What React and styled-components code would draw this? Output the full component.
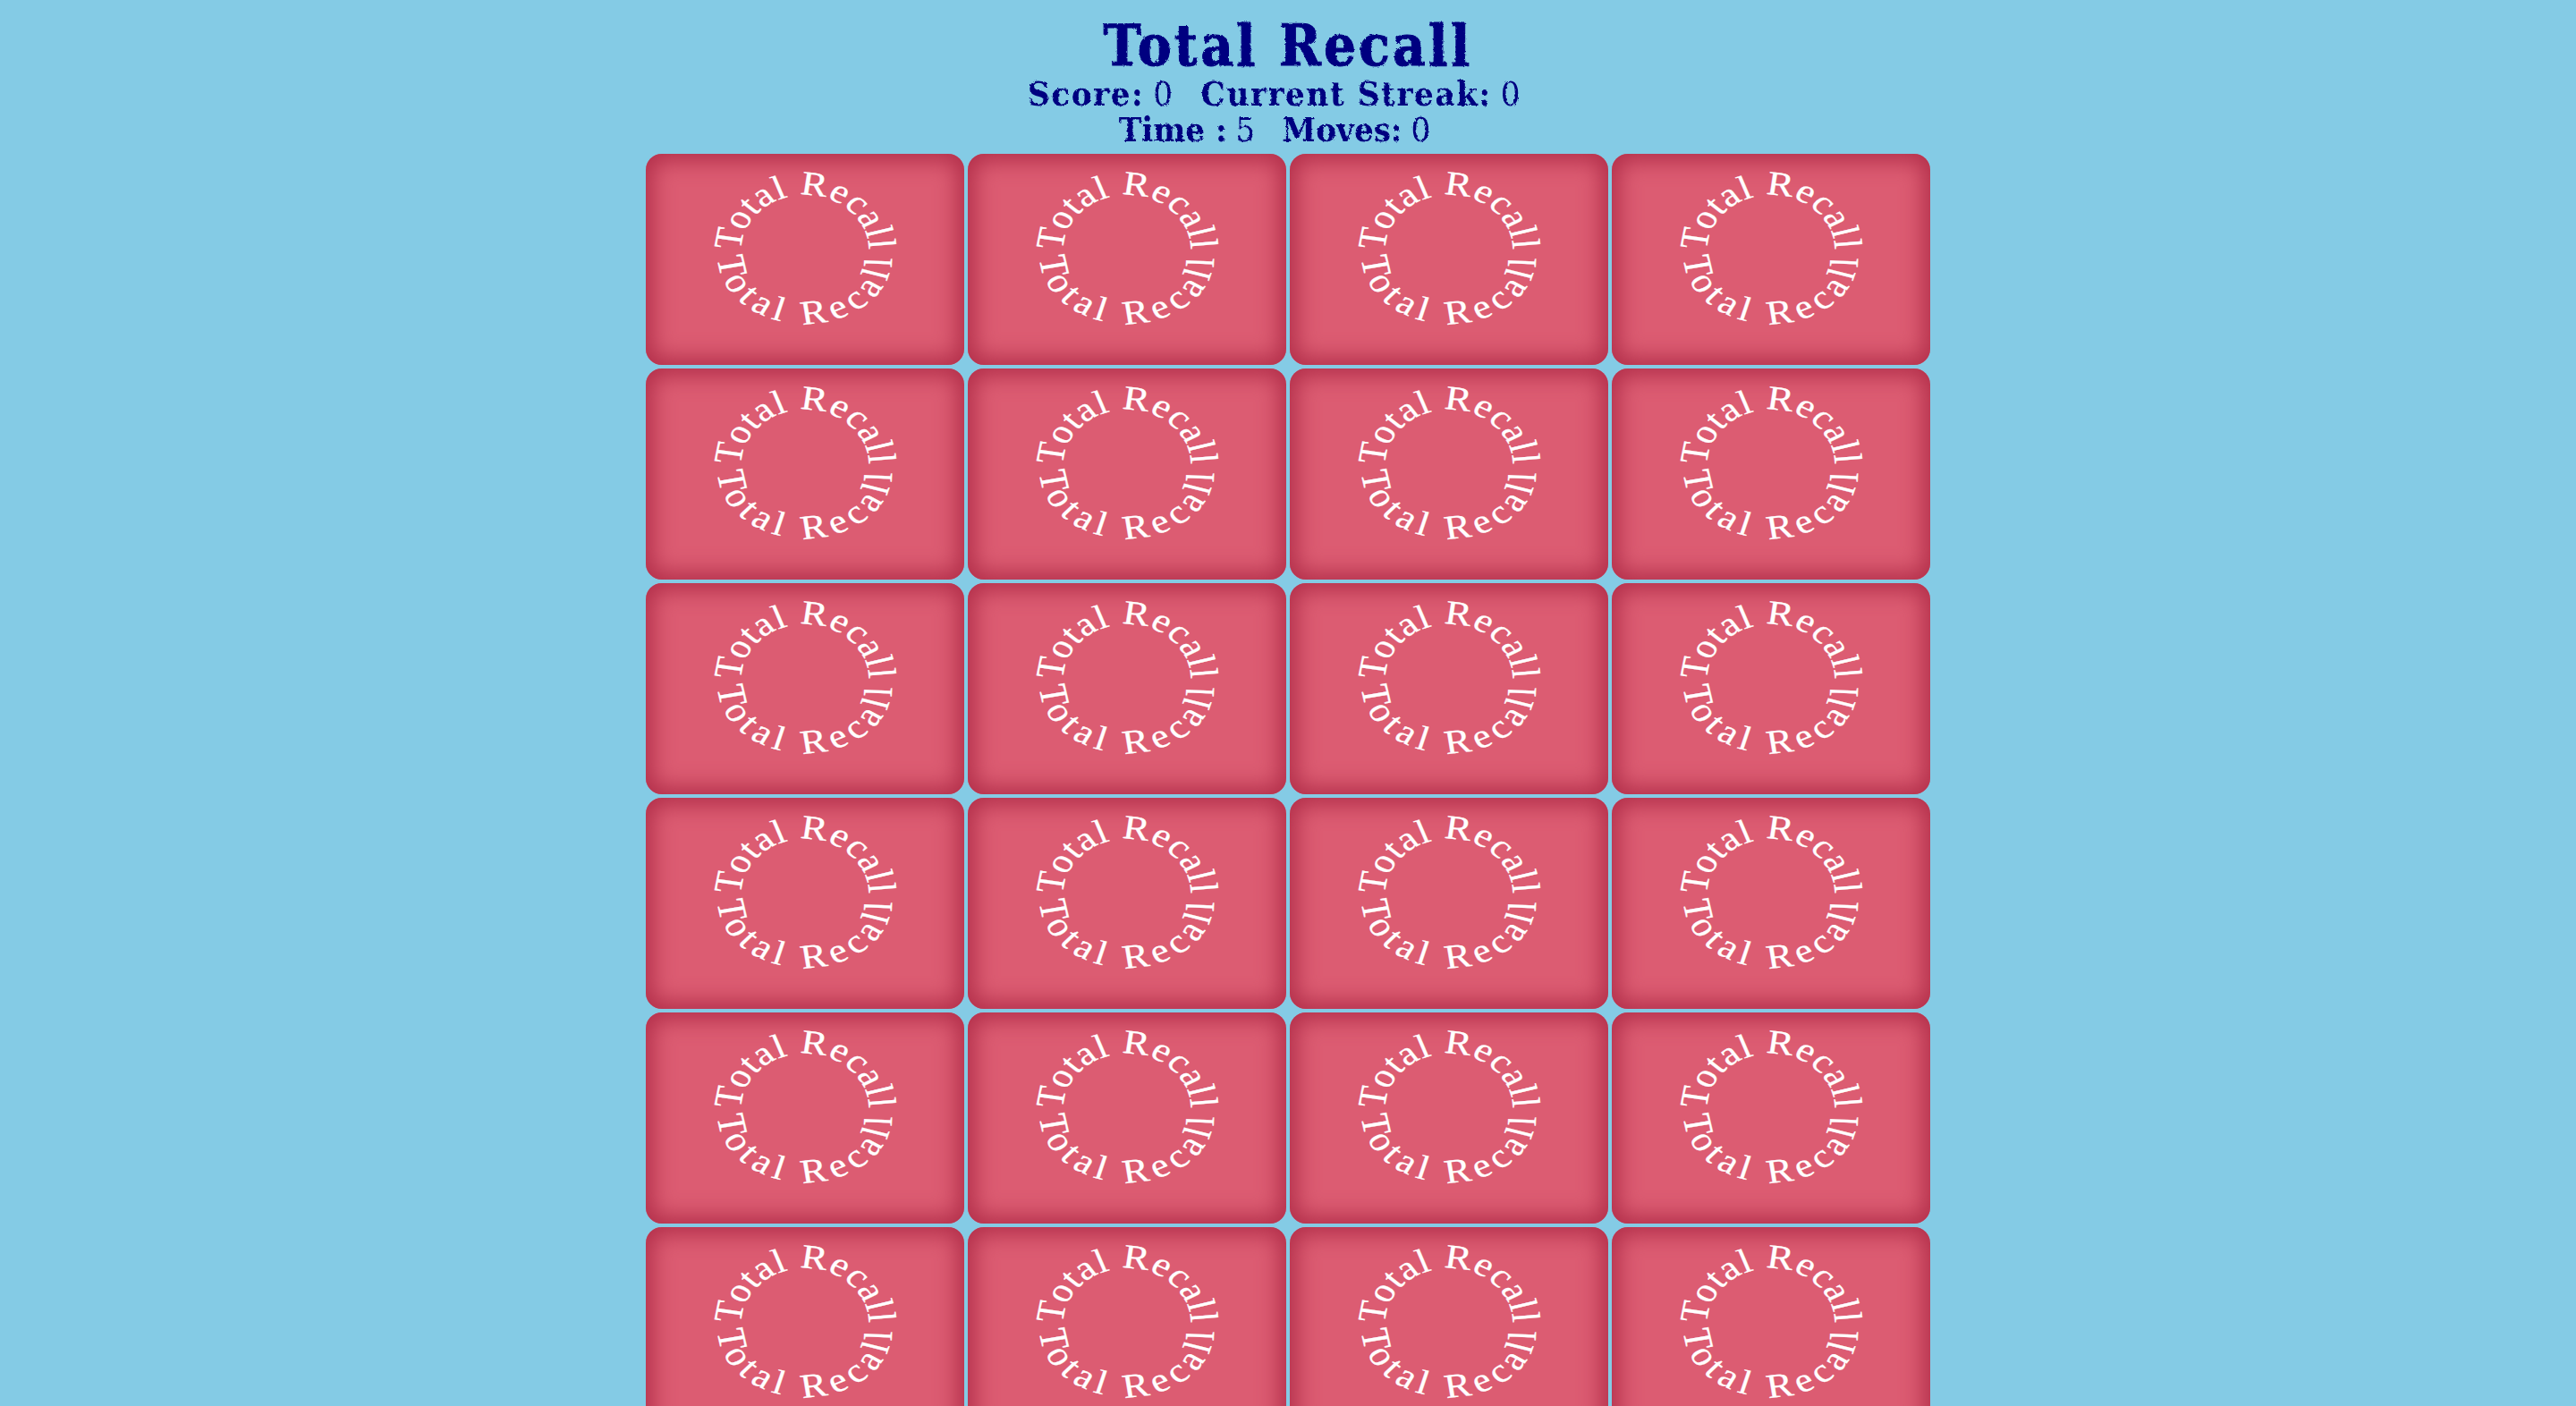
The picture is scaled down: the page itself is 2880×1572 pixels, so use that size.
import styled, { createGlobalStyle } from 'styled-components';

const GlobalStyle = createGlobalStyle`
  html, body {
    margin: 0;
    padding: 0;
    background: #84cbe5;
    overflow: hidden;
  }
`

const Page = styled.div`
  height: 1572px;
  overflow: hidden;
`
const Header = styled.header`
  height: 170px;
  padding-top: 17px;
  box-sizing: border-box;
  display: flex;
  flex-direction: column;
  align-items: center;
  color: #000080;
  font-family: "DejaVu Serif", "Liberation Serif", serif;
  font-stretch: condensed;
  filter: url(#rough);
`
const Title = styled.h1`
  margin: 0;
  font-size: 63px;
  line-height: 68px;
  font-weight: 700;
  letter-spacing: 3.2px;
  -webkit-text-stroke: 1px #000080;
`
const Stats = styled.div`
  display: flex;
  justify-content: center;
  font-size: 38px;
  line-height: 39px;
  font-weight: 700;
  letter-spacing: ${props => props.$spacing || 0}px;
`
const Stat = styled.span`
  margin-right: 30px;
`
const Value = styled.span`
  font-weight: 400;
  margin-left: 10px;
`
const Board = styled.div`
  width: 1440px;
  margin: 0 auto;
  display: grid;
  grid-template-columns: repeat(4, 1fr);
`
const Card = styled.div`
  height: 236px;
  margin: 2px;
  border-radius: 18px;
  background: #dc5c72;
  box-shadow: inset 0 0 24px 8px #b3304b;
`
const CardBack = styled.svg`
  display: block;
  width: 100%;
  height: 100%;
  font-family: "Liberation Serif", serif;
  font-size: 38px;
  path {
    fill: none;
    stroke: none;
  }
  text {
    fill: #fff;
    stroke: #fff;
    stroke-width: 0.3px;
  }
`

const cards = Array.from({ length: 24 }, (_, i) => i)

function App() {
  return <Page>
    <GlobalStyle />
    <svg width="0" height="0" style={{ position: 'absolute' }}>
      <filter id="rough">
        <feTurbulence type="fractalNoise" baseFrequency="0.35" numOctaves="2" seed="3" />
        <feDisplacementMap in="SourceGraphic" scale="3" />
      </filter>
    </svg>
    <Header>
      <Title>Total Recall</Title>
      <Stats $spacing={1.6}>
        <Stat>Score:<Value>0</Value></Stat>
        <Stat>Current Streak:<Value>0</Value></Stat>
      </Stats>
      <Stats>
        <Stat>Time :<Value>5</Value></Stat>
        <Stat>Moves:<Value>0</Value></Stat>
      </Stats>
    </Header>
    <Board>
      {
        cards.map((val) => {
          return <Card key={val}>
            <CardBack viewBox="0 0 304 236" preserveAspectRatio="none">
              <path id={`top-${val}`} d="M91 108 A61 62 0 0 1 213 108" />
              <path id={`bottom-${val}`} d="M69 116 A83 74 0 0 0 235 116" />
              <text letterSpacing="0.7">
                <textPath href={`#top-${val}`}>Total Recall</textPath>
              </text>
              <text letterSpacing="5.6">
                <textPath href={`#bottom-${val}`}>Total Recall</textPath>
              </text>
            </CardBack>
          </Card>
        })
      }
    </Board>
  </Page>
}

export default App;
